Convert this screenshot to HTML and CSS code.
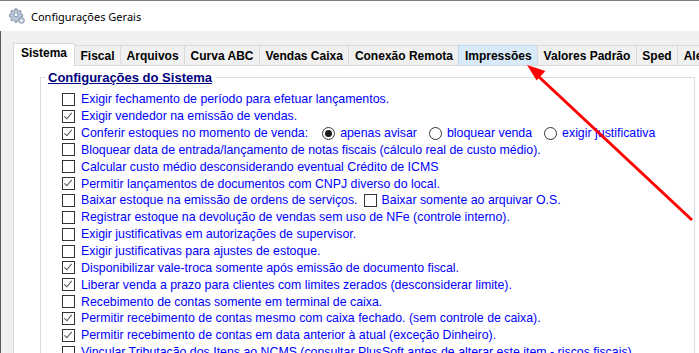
FILE: index.html
```html
<!DOCTYPE html>
<html lang="pt-BR">
<head>
    <meta charset="UTF-8">
    <title>Configurações Gerais</title>
    <link rel="stylesheet" href="styles.css">
</head>
<body>
<div class="window">
    <div class="titlebar">
        <svg class="app-icon" width="16" height="16" viewBox="0 0 16 16">
            <g fill="#b9c6d8" stroke="#6f7f96" stroke-width="0.8">
                <path d="M6 0.8h2l0.3 1.6 1.3 0.6 1.4-0.9 1.4 1.4-0.9 1.4 0.6 1.3 1.6 0.3v2l-1.6 0.3-0.6 1.3 0.9 1.4-1.4 1.4-1.4-0.9-1.3 0.6-0.3 1.6h-2l-0.3-1.6-1.3-0.6-1.4 0.9-1.4-1.4 0.9-1.4-0.6-1.3-1.6-0.3v-2l1.6-0.3 0.6-1.3-0.9-1.4 1.4-1.4 1.4 0.9 1.3-0.6z"/>
            </g>
            <circle cx="7" cy="6.8" r="2" fill="#fff" stroke="#6f7f96" stroke-width="0.8"/>
            <circle cx="12.5" cy="12.5" r="2.8" fill="#c9d4e3" stroke="#6f7f96" stroke-width="0.8"/>
            <circle cx="12.5" cy="12.5" r="1" fill="#fff"/>
        </svg>
        <span class="title">Configurações Gerais</span>
    </div>

    <div class="main">
        <div class="tabs">
            <div class="tab active">Sistema</div>
            <div class="tab">Fiscal</div>
            <div class="tab">Arquivos</div>
            <div class="tab">Curva ABC</div>
            <div class="tab">Vendas Caixa</div>
            <div class="tab">Conexão Remota</div>
            <div class="tab hover">Impressões</div>
            <div class="tab">Valores Padrão</div>
            <div class="tab">Sped</div>
            <div class="tab">Alertas</div>
        </div>

        <div class="panel">
            <fieldset class="group">
                <legend>Configurações do Sistema</legend>

                <div class="row"><span class="chk"></span>Exigir fechamento de período para efetuar lançamentos.</div>
                <div class="row"><span class="chk on"></span>Exigir vendedor na emissão de vendas.</div>
                <div class="row">
                    <span class="chk on"></span>Conferir estoques no momento de venda:
                    <span class="radio on first"></span>apenas avisar
                    <span class="radio"></span>bloquear venda
                    <span class="radio"></span>exigir justificativa
                </div>
                <div class="row"><span class="chk"></span>Bloquear data de entrada/lançamento de notas fiscais (cálculo real de custo médio).</div>
                <div class="row"><span class="chk"></span>Calcular custo médio desconsiderando eventual Crédito de ICMS</div>
                <div class="row"><span class="chk on"></span>Permitir lançamentos de documentos com CNPJ diverso do local.</div>
                <div class="row">
                    <span class="chk"></span>Baixar estoque na emissão de ordens de serviços.
                    <span class="chk inline"></span>Baixar somente ao arquivar O.S.
                </div>
                <div class="row"><span class="chk"></span>Registrar estoque na devolução de vendas sem uso de NFe (controle interno).</div>
                <div class="row"><span class="chk"></span>Exigir justificativas em autorizações de supervisor.</div>
                <div class="row"><span class="chk"></span>Exigir justificativas para ajustes de estoque.</div>
                <div class="row"><span class="chk on"></span>Disponibilizar vale-troca somente após emissão de documento fiscal.</div>
                <div class="row"><span class="chk on"></span>Liberar venda a prazo para clientes com limites zerados (desconsiderar limite).</div>
                <div class="row"><span class="chk"></span>Recebimento de contas somente em terminal de caixa.</div>
                <div class="row"><span class="chk on"></span>Permitir recebimento de contas mesmo com caixa fechado. (sem controle de caixa).</div>
                <div class="row"><span class="chk on"></span>Permitir recebimento de contas em data anterior à atual (exceção Dinheiro).</div>
                <div class="row"><span class="chk"></span>Vincular Tributação dos Itens ao NCMS (consultar PlusSoft antes de alterar este item - riscos fiscais).</div>
            </fieldset>
        </div>
    </div>

    <!-- seta de destaque -->
    <svg class="arrow" width="699" height="353" viewBox="0 0 699 353">
        <line x1="692" y1="219" x2="538" y2="75" stroke="#ff0000" stroke-width="3"/>
        <polygon points="527,64 545.4,70.1 536.6,79.5" fill="#ff0000"/>
    </svg>
</div>
</body>
</html>
```

FILE: styles.css
```css
body {
    margin: 0;
    width: 699px;
    height: 353px;
    overflow: hidden;
    background-color: #f0f0f0;
    font-family: "Liberation Sans", Arial, sans-serif;
}
.window {
    position: relative;
    width: 699px;
    height: 353px;
    overflow: hidden;
    border-top: 1px solid #7a7a7a;
    box-sizing: border-box;
}
.titlebar {
    height: 30px;
    background-color: white;
    display: flex;
    align-items: center;
    padding-left: 9px;
}
.app-icon {
    margin-right: 6px;
    margin-top: -1px;
}
.title {
    font-family: "Segoe UI", "Noto Sans", sans-serif;
    font-size: 11px;
    color: #000;
}
.main {
    border-left: 1px solid #5a5a5a;
    height: 322px;
    padding-top: 12px;
    box-sizing: border-box;
}
.tabs {
    display: flex;
    align-items: flex-end;
    margin-left: 12px;
    height: 22px;
    position: relative;
    z-index: 1;
}
.tab {
    height: 20px;
    line-height: 19px;
    padding: 1px 5.5px 0 5.5px;
    box-sizing: border-box;
    border: 1px solid #d9d9d9;
    border-bottom: none;
    margin-left: -1px;
    background-color: #f0f0f0;
    font-size: 12px;
    font-weight: bold;
    color: #000;
    white-space: nowrap;
}
.tab.active {
    height: 23px;
    margin-left: 0;
    margin-bottom: -1px;
    padding: 0 7px 3px 7px;
    background-color: white;
    position: relative;
    z-index: 2;
}
.tab.hover {
    background-color: #d8eaf9;
    border-color: #c0dcf3;
}
.panel {
    margin-left: 12px;
    width: 720px;
    height: 300px;
    background-color: white;
    border: 1px solid #d9d9d9;
    padding: 4px 0 0 26px;
    box-sizing: border-box;
}
.group {
    width: 655px;
    margin: 0;
    padding: 6px 0 0 21px;
    border: 1px solid #dcdcdc;
    border-bottom: none;
    box-sizing: border-box;
    height: 320px;
}
.group legend {
    margin-left: -17px;
    padding: 0 3px;
    font-size: 13px;
    line-height: 15px;
    font-weight: bold;
    color: #000080;
    text-decoration: underline;
}
.row {
    display: flex;
    align-items: center;
    height: 16.85px;
    font-size: 12.35px;
    color: #0000ff;
    white-space: nowrap;
}
.chk {
    width: 13px;
    height: 13px;
    box-sizing: border-box;
    border: 1px solid #333;
    background-color: white;
    margin-right: 6px;
    flex-shrink: 0;
    position: relative;
}
.chk.on::after {
    content: "";
    position: absolute;
    left: 3px;
    top: 0px;
    width: 3px;
    height: 7px;
    border-right: 1.5px solid #555;
    border-bottom: 1.5px solid #555;
    transform: rotate(40deg);
}
.chk.inline {
    margin-left: 6px;
    margin-right: 5px;
}
.radio {
    width: 13px;
    height: 13px;
    box-sizing: border-box;
    border: 1px solid #333;
    border-radius: 50%;
    background-color: white;
    margin-left: 12px;
    margin-right: 5px;
    flex-shrink: 0;
    display: flex;
    align-items: center;
    justify-content: center;
}
.radio.first {
    margin-left: 14px;
}
.radio.on::after {
    content: "";
    width: 7px;
    height: 7px;
    border-radius: 50%;
    background-color: #1a1a1a;
}
.arrow {
    position: absolute;
    left: 0;
    top: 0;
    pointer-events: none;
    z-index: 5;
}
```
